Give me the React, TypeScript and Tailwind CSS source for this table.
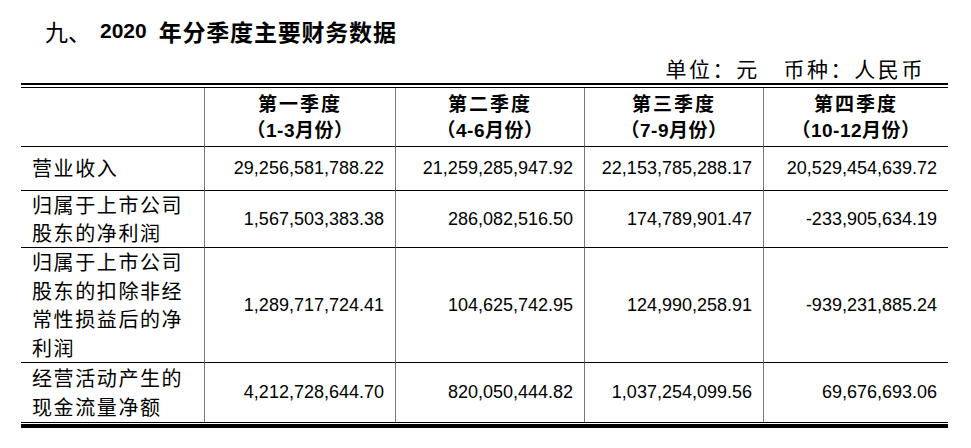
import React from 'react';

const quarters = [
  { name: '第一季度', range: '（1-3月份）' },
  { name: '第二季度', range: '（4-6月份）' },
  { name: '第三季度', range: '（7-9月份）' },
  { name: '第四季度', range: '（10-12月份）' },
];

const rows = [
  {
    label: ['营业收入'],
    values: ['29,256,581,788.22', '21,259,285,947.92', '22,153,785,288.17', '20,529,454,639.72'],
    h: 'h-[44px]',
  },
  {
    label: ['归属于上市公司', '股东的净利润'],
    values: ['1,567,503,383.38', '286,082,516.50', '174,789,901.47', '-233,905,634.19'],
    h: 'h-[57px]',
  },
  {
    label: ['归属于上市公司', '股东的扣除非经', '常性损益后的净', '利润'],
    values: ['1,289,717,724.41', '104,625,742.95', '124,990,258.91', '-939,231,885.24'],
    h: 'h-[115px]',
  },
  {
    label: ['经营活动产生的', '现金流量净额'],
    values: ['4,212,728,644.70', '820,050,444.82', '1,037,254,099.56', '69,676,693.06'],
    h: 'h-[59px]',
  },
];

const cjk = { fontFamily: '"Noto Sans CJK SC", sans-serif' };
const num = { fontFamily: '"Liberation Sans", "Noto Sans CJK SC", sans-serif' };

export default function App() {
  return (
    <div className="w-[971px] h-[448px] bg-white text-black overflow-hidden">
      {/* title */}
      <div className="pt-[17px] pl-[45px] flex items-center h-[45px] leading-[26px]" style={num}>
        <span className="text-[23px]" style={cjk}>九、</span>
        <span className="ml-[9px] text-[21px] font-bold">2020</span>
        <span className="ml-[12px] text-[23px] font-bold tracking-[0.8px]" style={cjk}>年分季度主要财务数据</span>
      </div>

      {/* unit */}
      <div className="mt-[11px] pr-[46px] flex justify-end text-[21px] leading-[24px] tracking-[2.6px]" style={cjk}>
        单位：元　币种：人民币
      </div>

      {/* table */}
      <div className="mt-[3px] ml-[21px] w-[927px] border-t-2 border-black pt-[2px]">
        <div className="border-t border-black grid grid-cols-[183px_191px_189px_179px_185px]">
          <div className="h-[59px] border-b border-black" />
          {quarters.map((q) => (
            <div
              key={q.name}
              className="h-[59px] border-b border-black border-l border-l-[#777] flex flex-col items-center justify-center text-[19px] leading-[28.5px] font-bold"
              style={num}
            >
              <div className="tracking-[2px]" style={cjk}>{q.name}</div>
              <div className="tracking-[0.5px]">{q.range}</div>
            </div>
          ))}

          {rows.map((r, i) => {
            const last = i === rows.length - 1;
            const bottom = last ? '' : 'border-b border-black';
            return (
              <React.Fragment key={i}>
                <div
                  className={`${r.h} ${bottom} pl-[11px] flex flex-col justify-center text-[20px] leading-[28.5px] tracking-[1.6px]`}
                  style={cjk}
                >
                  {r.label.map((l) => (
                    <div key={l}>{l}</div>
                  ))}
                </div>
                {r.values.map((v, j) => (
                  <div
                    key={j}
                    className={`${r.h} ${bottom} border-l border-l-[#777] pr-[11px] flex items-center justify-end text-[18px]`}
                    style={num}
                  >
                    {v}
                  </div>
                ))}
              </React.Fragment>
            );
          })}
        </div>
        <div className="border-t border-black pt-[1px]">
          <div className="border-t-2 border-black h-[1px]" />
          <div className="border-t-2 border-black" />
        </div>
      </div>
    </div>
  );
}
